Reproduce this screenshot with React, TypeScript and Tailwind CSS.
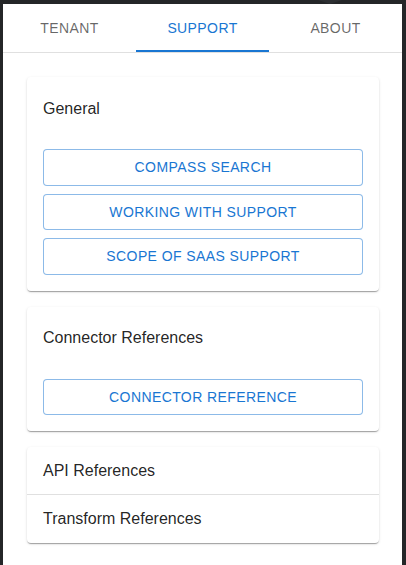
import React from "react";

const font = { fontFamily: '"Liberation Sans", Arial, Helvetica, sans-serif' };

function OutlineButton({ label }: { label: string }) {
  return (
    <button
      className="h-[36.5px] w-full rounded-[4px] border border-[rgba(25,118,210,0.5)] bg-white text-[14px] leading-[24.5px] tracking-[0.4px] text-[#1976d2] uppercase"
      style={font}
    >
      {label}
    </button>
  );
}

function Card({ title, buttons }: { title: string; buttons: string[] }) {
  return (
    <div className="rounded-[4px] bg-white px-4 pt-[19.5px] pb-4 shadow-[0px_2px_1px_-1px_rgba(0,0,0,0.2),0px_1px_1px_0px_rgba(0,0,0,0.14),0px_1px_3px_0px_rgba(0,0,0,0.12)]">
      <div className="text-[16px] leading-[24px] text-[rgba(0,0,0,0.87)]">{title}</div>
      <div className="mt-[28.5px] flex flex-col gap-[8px]">
        {buttons.map((b) => (
          <OutlineButton key={b} label={b} />
        ))}
      </div>
    </div>
  );
}

export default function App() {
  const tabs = ["Tenant", "Support", "About"];
  return (
    <div className="relative h-[565px] w-[406px] overflow-hidden bg-[#242628]" style={font}>
      <div className="absolute left-[318px] top-0 h-0 w-0 border-l-[12px] border-r-[12px] border-t-[4px] border-l-transparent border-r-transparent border-t-[#2d2f32]" />
      <div className="ml-[3px] mt-[4px] h-[561px] w-[399px] bg-white">
        <div className="flex border-b border-[#e0e0e0]">
          {tabs.map((t, i) => (
            <div
              key={t}
              className={
                "relative flex h-[48px] flex-1 items-center justify-center text-[14px] uppercase tracking-[0.4px] " +
                (i === 1 ? "text-[#1976d2]" : "text-[rgba(0,0,0,0.6)]")
              }
            >
              {t}
              {i === 1 && <div className="absolute bottom-0 left-0 right-0 h-[2px] bg-[#1976d2]" />}
            </div>
          ))}
        </div>
        <div className="flex flex-col gap-4 pl-6 pr-[23px] pt-6">
          <Card
            title="General"
            buttons={["Compass Search", "Working with Support", "Scope of SaaS Support"]}
          />
          <Card title="Connector References" buttons={["Connector Reference"]} />
          <div className="rounded-[4px] bg-white shadow-[0px_2px_1px_-1px_rgba(0,0,0,0.2),0px_1px_1px_0px_rgba(0,0,0,0.14),0px_1px_3px_0px_rgba(0,0,0,0.12)]">
            <div className="flex h-[48px] items-center border-b border-[rgba(0,0,0,0.12)] px-4 text-[16px] leading-[24px] text-[rgba(0,0,0,0.87)]">
              API References
            </div>
            <div className="flex h-[48px] items-center px-4 text-[16px] leading-[24px] text-[rgba(0,0,0,0.87)]">
              Transform References
            </div>
          </div>
        </div>
      </div>
    </div>
  );
}
